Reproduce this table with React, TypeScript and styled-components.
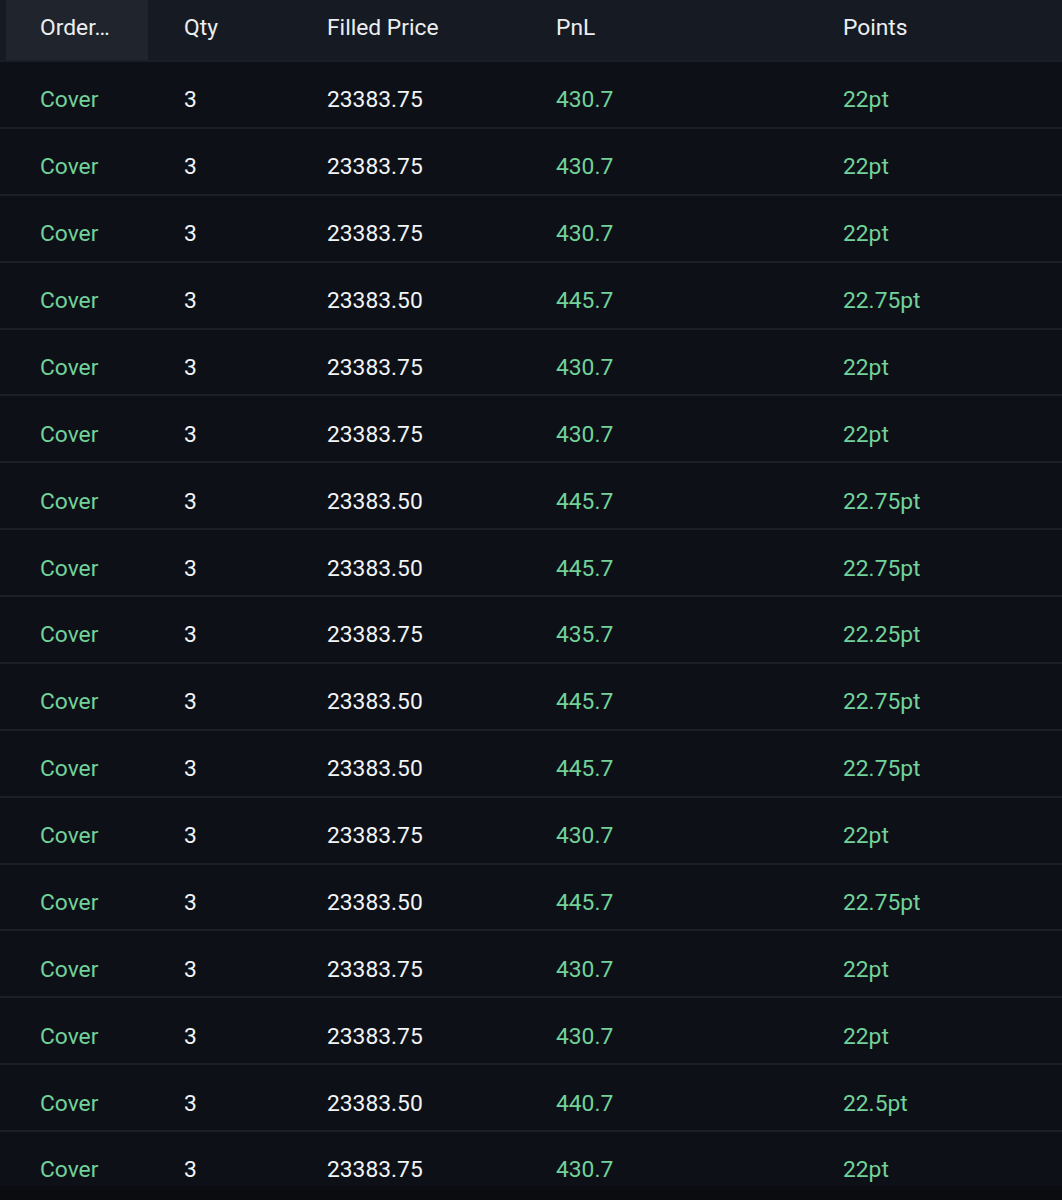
import React from 'react'
import styled, { createGlobalStyle } from 'styled-components'

const GlobalStyle = createGlobalStyle`
  html, body {
    margin: 0;
    padding: 0;
    background: #0a0c10;
  }
  * {
    box-sizing: border-box;
  }
`

const cols = '144px 143px 229px 287px 1fr'

const TableWrap = styled.div`
  width: 1062px;
  height: 1186px;
  overflow: hidden;
  background-color: #0d1117;
  font-family: Roboto, 'Noto Sans', sans-serif;
  font-size: 22.8px;
`
const HeaderRow = styled.div`
  display: grid;
  grid-template-columns: ${cols};
  padding-left: 6px;
  height: 62px;
  background-color: #161b23;
  border-bottom: 2px solid #1a1f27;
`
const HeaderCell = styled.div<{ $active?: boolean }>`
  display: flex;
  align-items: center;
  height: 60px;
  padding: 0 0 6px 34px;
  color: #eceef1;
  white-space: nowrap;
  background-color: ${(p) => (p.$active ? '#1f242d' : 'transparent')};
  margin-right: ${(p) => (p.$active ? '2px' : '0')};
`
const Row = styled.div`
  display: grid;
  grid-template-columns: ${cols};
  padding-left: 6px;
  height: 66.875px;
  border-bottom: 2px solid #1b2028;
`
const Cell = styled.div<{ $green?: boolean }>`
  display: flex;
  align-items: center;
  padding: 11px 0 0 34px;
  color: ${(p) => (p.$green ? '#72d29a' : '#f3f4f6')};
  white-space: nowrap;
`

type Trade = { price: string; pnl: string; pts: string }

const A: Trade = { price: '23383.75', pnl: '430.7', pts: '22pt' }
const B: Trade = { price: '23383.50', pnl: '445.7', pts: '22.75pt' }
const C: Trade = { price: '23383.75', pnl: '435.7', pts: '22.25pt' }
const D: Trade = { price: '23383.50', pnl: '440.7', pts: '22.5pt' }

const trades: Trade[] = [A, A, A, B, A, A, B, B, C, B, B, A, B, A, A, D, A]

const App = () => {
  return (
    <>
      <GlobalStyle />
      <TableWrap>
        <HeaderRow>
          <HeaderCell $active>Order…</HeaderCell>
          <HeaderCell>Qty</HeaderCell>
          <HeaderCell>Filled Price</HeaderCell>
          <HeaderCell>PnL</HeaderCell>
          <HeaderCell>Points</HeaderCell>
        </HeaderRow>
        {trades.map((t, i) => (
          <Row key={i}>
            <Cell $green>Cover</Cell>
            <Cell>3</Cell>
            <Cell>{t.price}</Cell>
            <Cell $green>{t.pnl}</Cell>
            <Cell $green>{t.pts}</Cell>
          </Row>
        ))}
      </TableWrap>
    </>
  )
}

export default App
